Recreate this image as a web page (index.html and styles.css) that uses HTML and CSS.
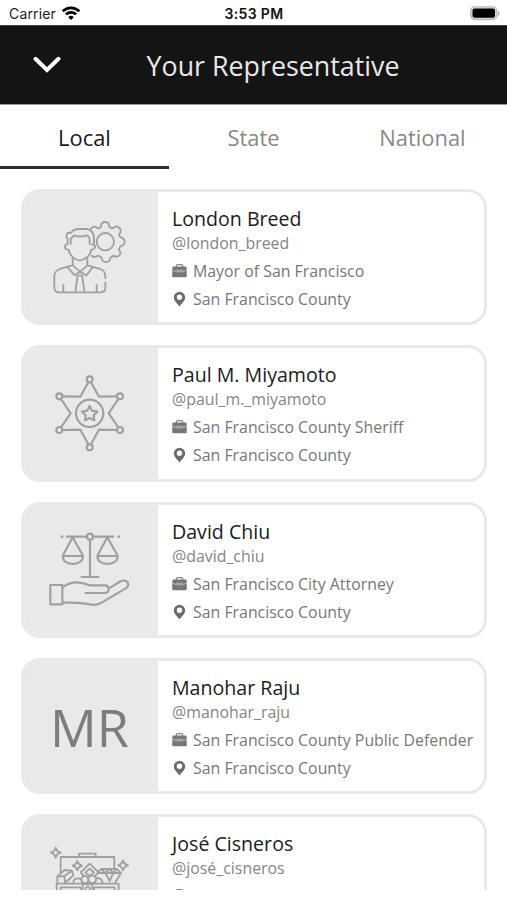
FILE: index.html
```html
<!DOCTYPE html>
<html lang="en">
<head>
<meta charset="utf-8">
<title>Your Representative</title>
<link rel="stylesheet" href="styles.css">
</head>
<body>
<svg class="defs" width="0" height="0" aria-hidden="true">
  <symbol id="case" viewBox="0 0 15 14">
    <path d="M4.3 3V1.900Q4.300.7 5.500.7h4q1.200 0 1.200 1.200V3" fill="none" stroke="#888" stroke-width="1.200"/>
    <path d="M1.500 2.600h12q1 0 1.100 1.200L14.800 12q0 1.300-1.300 1.300h-12Q.2 13.300.2 12L.4 3.800q.1-1.200 1.100-1.200z" fill="#777"/>
    <path d="M.5 6.200 4.500 7.800h6l4-1.600M4 5.800l2 1.100 1.500-.8 1.500.8 2-1.100" fill="none" stroke="#ccc" stroke-width=".8"/>
  </symbol>
  <symbol id="pin" viewBox="0 0 15 16">
    <path fill-rule="evenodd" d="M7.500.8a5.700 5.700 0 0 1 5.700 5.700c0 3.300-3.500 5.900-5.700 8.900-2.200-3-5.700-5.600-5.700-8.900A5.700 5.700 0 0 1 7.500.8zm0 2.800a2.700 2.700 0 1 0 0 5.400 2.700 2.700 0 0 0 0-5.400z" fill="#6c6c6c"/>
  </symbol>
</svg>
<div class="screen">
  <div class="status">
    <div class="carrier">Carrier
      <svg width="20" height="15" viewBox="0 0 20 15" fill="none" stroke="#000" stroke-width="2.700"><path d="M1.700 5.200a11.800 11.800 0 0 1 16.600 0M4.900 8.400a7.300 7.300 0 0 1 10.200 0"/><path d="M10 14 7.200 11.200a4 4 0 0 1 5.600 0z" fill="#000" stroke="none"/></svg>
    </div>
    <div class="time">3:53 PM</div>
    <div class="battery"><svg width="31" height="15" viewBox="0 0 31 15"><rect x="1.700" y=".9" width="26" height="12.600" rx="4" fill="#ddd" stroke="#bbb" stroke-width="1.400"/><rect x="3.500" y="2.600" width="22.500" height="9.200" rx="2" fill="#000"/><path d="M29 5v5q1.500-.8 1.500-2.500T29 5z" fill="#aaa"/></svg></div>
  </div>
  <header class="header">
    <svg class="back" width="28" height="18" viewBox="0 0 28 18" fill="none" stroke="#fff" stroke-width="4" stroke-linecap="round" stroke-linejoin="miter"><path d="M2.500 2.800 14 14 25.500 2.800"/></svg>
    <h1>Your Representative</h1>
  </header>
  <nav class="tabs"><a class="tab active">Local</a><a class="tab">State</a><a class="tab">National</a></nav>
  <main class="list">
    <article class="card">
      <div class="thumb"><svg viewBox="18 27 411 411">
        <circle cx="271" cy="185" r="26"/>
        <path d="M225 150l8-9q6-3 12 2l6 2q5-2 7-5 0-14 12-14t13 14l7 5q5 0 11-5 8-2 14 6 6 8-3 17l4 9q13 2 13 13t-13 14l-5 10q9 9 3 16-8 9-17 2l-10 5q-2 14-14 14t-14-14l-9-5q-11 6-15 3l-7-4"/>
        <path d="M158 192v-16q-8-6 0-18l9 1q9-12 24-12h26q20 5 20 29v17M167 194v-18q7-5 10-10 14 7 41 0l6 11v17M159 193q-10-1-9 8t11 8q2 14 13 23 20 18 42 0 11-9 13-23 10 0 11-8t-11-8"/>
        <path d="M173 234v22M217 234v22M271 297v-8q0-16-15-22-15-5-38-11l-23 19-22-19q-25 6-38 11-17 6-17 22v36q2 12 15 12h123q15 0 15-12v-20M145 313v24M245 313v24M158 262l21 24 16-11 19 11 19-24M188 286l-7 51M201 286l8 51M188 286h14"/>
      </svg></div>
      <div class="info"><h2>London Breed</h2><p class="handle">@london_breed</p>
        <p class="row"><svg class="case"><use href="#case"/></svg><span>Mayor of San Francisco</span></p>
        <p class="row"><svg class="pin"><use href="#pin"/></svg><span>San Francisco County</span></p></div>
    </article>
    <article class="card">
      <div class="thumb"><svg class="heavy" viewBox="18 16 411 411">
        <circle cx="224" cy="119" r="9"/><circle cx="133" cy="170" r="9"/><circle cx="315" cy="170" r="9"/><circle cx="133" cy="271" r="9"/><circle cx="315" cy="271" r="9"/><circle cx="224" cy="323" r="9"/>
        <path d="M220 128l-24 43-54-1M228 128l24 43 54-1M138 178l29 43-29 42M310 178l-29 43 29 42M142 271l54-1 24 44M306 271l-54-1-24 44"/><circle cx="224" cy="221" r="41"/>
        <path d="M224 199l7 14 16 3-11 11 2 15-14-7-14 7 2-15-11-11 16-3z"/>
      </svg></div>
      <div class="info"><h2>Paul M. Miyamoto</h2><p class="handle">@paul_m._miyamoto</p>
        <p class="row"><svg class="case"><use href="#case"/></svg><span>San Francisco County Sheriff</span></p>
        <p class="row"><svg class="pin"><use href="#pin"/></svg><span>San Francisco County</span></p></div>
    </article>
    <article class="card">
      <div class="thumb"><svg class="heavy" viewBox="18 14 411 411">
        <circle cx="225" cy="121" r="9"/><path d="M153 121h63M234 121h63M137 121h8M307 121h8M225 130v111M197 242h56M173 123l-30 55q0 23 30 25 31-2 31-25zM143 179h61M277 123l-30 55q0 23 30 25 31-2 31-25zM247 179h61"/>
        <path d="M106 266h36v58h-36zM142 273c20-15 45-19 70-10q8 4 17 4h41q10 0 11 11 0 12-11 12h-61M281 277l37-23q15-5 21 6 3 10-7 16l-72 43q-14 8-31 6-37-7-87-7"/>
      </svg></div>
      <div class="info"><h2>David Chiu</h2><p class="handle">@david_chiu</p>
        <p class="row"><svg class="case"><use href="#case"/></svg><span>San Francisco City Attorney</span></p>
        <p class="row"><svg class="pin"><use href="#pin"/></svg><span>San Francisco County</span></p></div>
    </article>
    <article class="card">
      <div class="thumb"><span class="initials">MR</span></div>
      <div class="info"><h2>Manohar Raju</h2><p class="handle">@manohar_raju</p>
        <p class="row"><svg class="case"><use href="#case"/></svg><span>San Francisco County Public Defender</span></p>
        <p class="row"><svg class="pin"><use href="#pin"/></svg><span>San Francisco County</span></p></div>
    </article>
    <article class="card">
      <div class="thumb"><svg viewBox="18 28 411 411">
        <path d="M122 129q3 12 15 15-12 3-15 15-3-12-15-15 12-3 15-15zM187 169q3 11 14 14-11 3-14 14-3-11-14-14 11-3 14-14zM324 167q3 12 15 15-12 3-15 15-3-12-15-15 12-3 15-15z"/>
        <path d="M137 204v-47h161v35M192 157v-10h50v10M125 258v-21h186v21M137 258v-10h60v10M237 258v-10h62v10M203 258v-20h29v20M211 258q0-12 7-12t7 12"/>
        <path d="M127 234v-19l22-19 22 2 4 14-25 23M127 216l21-2 23-16M148 214l2 20M197 203l27-26 27 26-12 12M197 203l12 13M211 203l13-11 13 11-13 11zM246 205l13-12h46l13 12-18 29M246 205h72M259 193l12 12 12-12 12 12 10-12M271 205l13 24 11-24M175 235q0-14 13-14t13 14M199 223q3-12 13-9 9 2 8 12-1 10-10 10-11-2-11-13M220 225q1-13 13-12 12 2 10 13-2 10-12 10-10-2-11-11M242 221q17-4 22 14"/>
      </svg></div>
      <div class="info"><h2>José Cisneros</h2><p class="handle">@josé_cisneros</p>
        <p class="row"><svg class="case"><use href="#case"/></svg></p></div>
    </article>
  </main>
</div>
</body>
</html>
```

FILE: styles.css
```css
* { box-sizing: border-box; }
body { margin: 0; background: #fff; font-family: "Open Sans", "Noto Sans", sans-serif; }
h1, h2, p { margin: 0; font-weight: 400; }
.defs { display: block; height: 0; }
.screen { width: 507px; height: 890px; overflow: hidden; display: flex; flex-direction: column; }
.status { height: 25px; flex: none; display: grid; grid-template-columns: 1fr auto 1fr; align-items: center; padding: 2px 8px 0 9px; font-family: Inter, sans-serif; font-size: 14px; line-height: 22px; color: #222; }
.carrier { display: flex; align-items: center; gap: 5px; letter-spacing: .15px; }
.time { font-weight: 600; color: #111; letter-spacing: .35px; }
.battery { display: flex; justify-content: flex-end; margin-right: -1px; }
.header { height: 80px; flex: none; background: #141414; border-top: 1px solid #444; border-bottom: 1px solid #999; display: flex; align-items: center; color: #e8e8e8; }
.back { margin-left: 33px; width: 28px; flex: none; }
.header h1 { flex: 1; margin-right: 22px; padding-top: 2px; text-align: center; font-size: 26.800px; line-height: 36px; }
.tabs { height: 64px; flex: none; display: grid; grid-template-columns: repeat(3, 1fr); }
.tab { text-align: center; font-size: 21.900px; line-height: 66px; color: #888; height: 64px; }
.tab.active { color: #1a1a1a; border-bottom: 3px solid #2a2d2a; }
.list { padding: 20px 20px 0 21px; display: flex; flex-direction: column; gap: 20px; }
.card { height: 136.300px; flex: none; display: flex; border: 3px solid #e9e9e9; border-radius: 19px; overflow: hidden; }
.thumb { width: 137px; margin: -3px 0 -3px -3px; background: #e9e9e9; flex: none; display: flex; align-items: center; justify-content: center; }
.thumb svg { width: 137px; height: 137px; fill: none; stroke: #a0a0a0; stroke-width: 5.500; stroke-linejoin: round; }
.thumb svg.heavy { stroke-width: 6.500; }
.initials { font-size: 52px; color: #7d7d7d; line-height: 72px; margin-top: 2px; }
.info { padding: 13px 0 0 14px; white-space: nowrap; }
.info h2 { font-size: 19.600px; line-height: 28px; color: #1c1c1c; }
.handle { font-size: 15.880px; line-height: 20px; color: #858585; }
.row { display: flex; align-items: center; gap: 6px; height: 28px; font-size: 15.880px; line-height: 28px; color: #777; }
.handle + .row { margin-top: 4px; }
.row svg { width: 15px; height: 14px; flex: none; }
.row svg.pin { height: 16px; }
```
